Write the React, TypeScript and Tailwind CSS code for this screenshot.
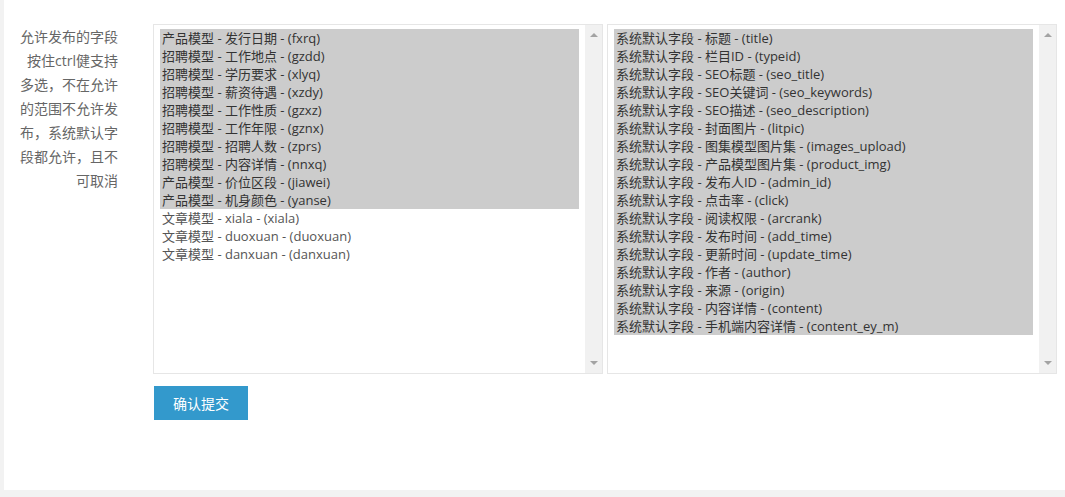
const leftOptions: { text: string; selected: boolean }[] = [
  { text: "产品模型 - 发行日期 - (fxrq)", selected: true },
  { text: "招聘模型 - 工作地点 - (gzdd)", selected: true },
  { text: "招聘模型 - 学历要求 - (xlyq)", selected: true },
  { text: "招聘模型 - 薪资待遇 - (xzdy)", selected: true },
  { text: "招聘模型 - 工作性质 - (gzxz)", selected: true },
  { text: "招聘模型 - 工作年限 - (gznx)", selected: true },
  { text: "招聘模型 - 招聘人数 - (zprs)", selected: true },
  { text: "招聘模型 - 内容详情 - (nnxq)", selected: true },
  { text: "产品模型 - 价位区段 - (jiawei)", selected: true },
  { text: "产品模型 - 机身颜色 - (yanse)", selected: true },
  { text: "文章模型 - xiala - (xiala)", selected: false },
  { text: "文章模型 - duoxuan - (duoxuan)", selected: false },
  { text: "文章模型 - danxuan - (danxuan)", selected: false },
];

const rightOptions: { text: string; selected: boolean }[] = [
  "系统默认字段 - 标题 - (title)",
  "系统默认字段 - 栏目ID - (typeid)",
  "系统默认字段 - SEO标题 - (seo_title)",
  "系统默认字段 - SEO关键词 - (seo_keywords)",
  "系统默认字段 - SEO描述 - (seo_description)",
  "系统默认字段 - 封面图片 - (litpic)",
  "系统默认字段 - 图集模型图片集 - (images_upload)",
  "系统默认字段 - 产品模型图片集 - (product_img)",
  "系统默认字段 - 发布人ID - (admin_id)",
  "系统默认字段 - 点击率 - (click)",
  "系统默认字段 - 阅读权限 - (arcrank)",
  "系统默认字段 - 发布时间 - (add_time)",
  "系统默认字段 - 更新时间 - (update_time)",
  "系统默认字段 - 作者 - (author)",
  "系统默认字段 - 来源 - (origin)",
  "系统默认字段 - 内容详情 - (content)",
  "系统默认字段 - 手机端内容详情 - (content_ey_m)",
].map((text) => ({ text, selected: true }));

const labelLines = [
  "允许发布的字段",
  "按住ctrl健支持",
  "多选，不在允许",
  "的范围不允许发",
  "布，系统默认字",
  "段都允许，且不",
  "可取消",
];

function FieldSelect({ options }: { options: { text: string; selected: boolean }[] }) {
  return (
    <div className="flex w-[450px] h-[350px] border border-[#e6e6e6] bg-white">
      {/* option list */}
      <div className="flex-1 pt-[4px] pl-[6px] pr-[6px] overflow-hidden">
        {options.map((o) => (
          <div
            key={o.text}
            className={`h-[18px] leading-[18px] pl-[2px] text-[13px] whitespace-nowrap ${
              o.selected ? "bg-[#cccccc] text-[#333]" : "text-[#555]"
            }`}
          >
            {o.text}
          </div>
        ))}
      </div>
      {/* scrollbar */}
      <div className="w-[17px] bg-[#f1f1f1] flex flex-col justify-between items-center py-[8px]">
        <div className="w-0 h-0 border-l-[4px] border-r-[4px] border-b-[4px] border-l-transparent border-r-transparent border-b-[#a3a3a3]" />
        <div className="w-0 h-0 border-l-[4px] border-r-[4px] border-t-[4px] border-l-transparent border-r-transparent border-t-[#a3a3a3]" />
      </div>
    </div>
  );
}

export default function App() {
  return (
    <div
      className="h-[497px] bg-[#f2f2f2] pl-[4px] overflow-hidden"
      style={{ fontFamily: '"Open Sans", "Noto Sans CJK SC", sans-serif' }}
    >
      <div className="h-[490px] bg-white flex pt-[24px]">
        {/* Label */}
        <div className="w-[149px] pr-[35px] pt-[1px] text-right text-[14px] leading-[24px] text-[#666] shrink-0">
          {labelLines.map((l) => (
            <div key={l} className="whitespace-nowrap">
              {l}
            </div>
          ))}
        </div>

        {/* Selects + button */}
        <div className="flex flex-col">
          <div className="flex gap-[4px]">
            <FieldSelect options={leftOptions} />
            <FieldSelect options={rightOptions} />
          </div>
          <div className="mt-[12px] pl-[1px]">
            <button className="w-[94px] h-[34px] bg-[#3399cc] text-white text-[14px]">
              确认提交
            </button>
          </div>
        </div>
      </div>
    </div>
  );
}
